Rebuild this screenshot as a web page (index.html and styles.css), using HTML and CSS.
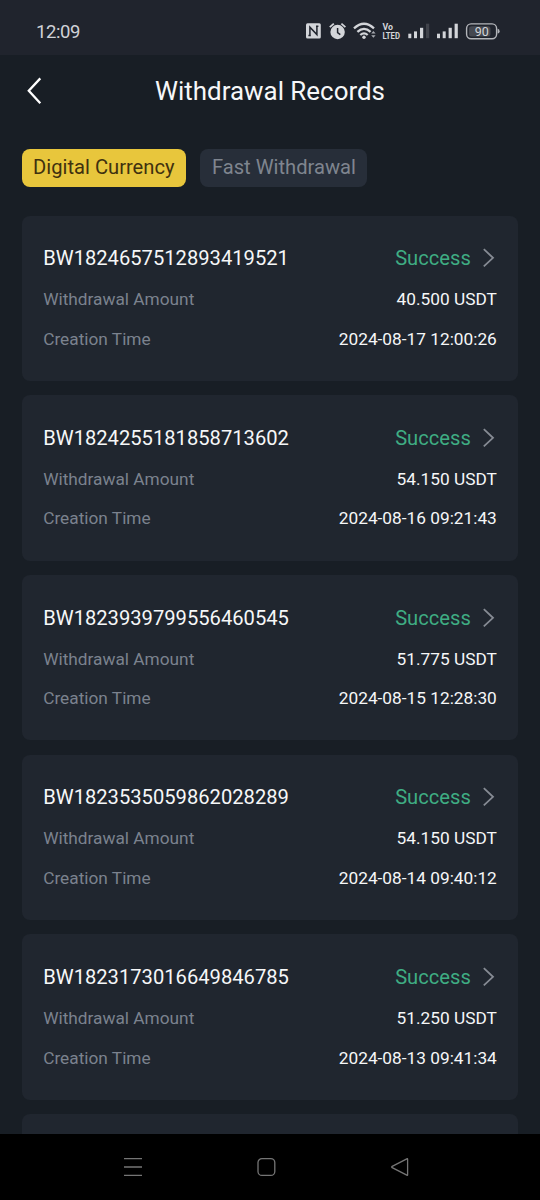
FILE: index.html
```html
<!DOCTYPE html>
<html lang="en">
<head>
<meta charset="utf-8">
<title>Withdrawal Records</title>
<link rel="stylesheet" href="styles.css">
</head>
<body>
<div class="screen">
  <div class="status">
    <span class="clock">12:09</span>
    <svg class="status-icons" width="220" height="45" viewBox="0 0 220 45">
      <rect x="16" y="13.3" width="14.8" height="15.2" rx="1.5" fill="#d3d5d9"/>
      <path d="M19.9 25.6V17.2L26.9 24.6V16.2M18.4 25.6h2.4M26 16.2h2.4" fill="none" stroke="#20242d" stroke-width="1.5"/>
      <circle cx="47.6" cy="22" r="7.2" fill="#d3d5d9"/>
      <path d="M39.8 17.2l4-3.6M55.4 17.2l-4-3.6" stroke="#d3d5d9" stroke-width="1.8"/>
      <path d="M47.6 18v4.6l2.7 2" fill="none" stroke="#20242d" stroke-width="1.5"/>
      <g fill="none" stroke="#d3d5d9" stroke-width="2.3">
        <path d="M64 18.4q10-9.2 20 0M67.4 21.9q6.6-6 13.2 0M70.3 25q3.7-3.2 7.4 0"/>
      </g>
      <circle cx="74" cy="27.2" r="1.7" fill="#d3d5d9"/>
      <path d="M81.2 23.6l2.2-2.5 2.2 2.5zM81.2 25.2l2.2 2.5 2.2-2.5z" fill="#a7aab0"/>
      <text x="92.5" y="19.9" class="volte" textLength="10.5" lengthAdjust="spacingAndGlyphs">Vo</text>
      <text x="92.5" y="28.5" class="volte" textLength="17.5" lengthAdjust="spacingAndGlyphs">LTED</text>
      <g fill="#d3d5d9">
        <rect x="118.3" y="23.7" width="3" height="4.5"/>
        <rect x="124" y="21.4" width="3" height="6.8"/>
        <rect x="130" y="17.8" width="3.2" height="10.4"/>
        <rect x="136" y="13.7" width="3.2" height="14.5" fill="#40434b"/>
        <rect x="147" y="23.7" width="3" height="4.5"/>
        <rect x="152.7" y="21.4" width="3" height="6.8"/>
        <rect x="158.6" y="17.8" width="3.2" height="10.4"/>
        <rect x="164.6" y="13.7" width="3.2" height="14.5"/>
      </g>
      <rect x="176.6" y="13.9" width="30" height="14.8" rx="4.5" fill="none" stroke="#b3b5ba" stroke-width="1.4"/>
      <rect x="179" y="16.2" width="21.5" height="10.2" rx="2.5" fill="#454850"/>
      <path d="M207.6 18.8q2 .3 2 2.4t-2 2.4z" fill="#b3b5ba"/>
      <text x="184.8" y="25.7" class="battery" textLength="14">90</text>
    </svg>
  </div>
  <header class="header">
    <svg class="back" width="20" height="32" viewBox="0 0 20 32"><path d="M17.3 3.4L5.8 15.8 17.3 28.2" fill="none" stroke="#fff" stroke-width="2.3"/></svg>
    <h1 class="title">Withdrawal Records</h1>
  </header>
  <nav class="tabs">
    <span class="tab tab-active">Digital Currency</span>
    <span class="tab">Fast Withdrawal</span>
  </nav>
  <main class="list">
    <section class="card">
      <div class="row row-head"><span>BW1824657512893419521</span><span class="state">Success<svg class="arrow" width="12" height="20" viewBox="0 0 12 20"><path d="M.8 1.2L10 9.8 .8 18.4"/></svg></span></div>
      <div class="row"><span class="label">Withdrawal Amount</span><span>40.500 USDT</span></div>
      <div class="row"><span class="label">Creation Time</span><span>2024-08-17 12:00:26</span></div>
    </section>
    <section class="card">
      <div class="row row-head"><span>BW1824255181858713602</span><span class="state">Success<svg class="arrow" width="12" height="20" viewBox="0 0 12 20"><path d="M.8 1.2L10 9.8 .8 18.4"/></svg></span></div>
      <div class="row"><span class="label">Withdrawal Amount</span><span>54.150 USDT</span></div>
      <div class="row"><span class="label">Creation Time</span><span>2024-08-16 09:21:43</span></div>
    </section>
    <section class="card">
      <div class="row row-head"><span>BW1823939799556460545</span><span class="state">Success<svg class="arrow" width="12" height="20" viewBox="0 0 12 20"><path d="M.8 1.2L10 9.8 .8 18.4"/></svg></span></div>
      <div class="row"><span class="label">Withdrawal Amount</span><span>51.775 USDT</span></div>
      <div class="row"><span class="label">Creation Time</span><span>2024-08-15 12:28:30</span></div>
    </section>
    <section class="card">
      <div class="row row-head"><span>BW1823535059862028289</span><span class="state">Success<svg class="arrow" width="12" height="20" viewBox="0 0 12 20"><path d="M.8 1.2L10 9.8 .8 18.4"/></svg></span></div>
      <div class="row"><span class="label">Withdrawal Amount</span><span>54.150 USDT</span></div>
      <div class="row"><span class="label">Creation Time</span><span>2024-08-14 09:40:12</span></div>
    </section>
    <section class="card">
      <div class="row row-head"><span>BW1823173016649846785</span><span class="state">Success<svg class="arrow" width="12" height="20" viewBox="0 0 12 20"><path d="M.8 1.2L10 9.8 .8 18.4"/></svg></span></div>
      <div class="row"><span class="label">Withdrawal Amount</span><span>51.250 USDT</span></div>
      <div class="row"><span class="label">Creation Time</span><span>2024-08-13 09:41:34</span></div>
    </section>
    <section class="card"></section>
  </main>
  <footer class="navbar">
    <svg width="20" height="20" viewBox="0 0 20 20"><path d="M1 1.6h18M1 10h18M1 18.4h18"/></svg>
    <svg width="20" height="20" viewBox="0 0 20 20"><rect x="2" y="1.6" width="16.8" height="16.8" rx="4"/></svg>
    <svg width="20" height="20" viewBox="0 0 20 20"><path d="M17.6 2.2v15.6q0 .8-.8.4L2.2 10.7q-1-.7 0-1.4L16.8 1.8q.8-.4.8.4z"/></svg>
  </footer>
</div>
</body>
</html>
```
FILE: styles.css
```css
* { box-sizing: border-box; }
body {
  margin: 0;
  background: #181e25;
  font-family: Roboto, "Liberation Sans", sans-serif;
  color: #f6f7f8;
}
.screen {
  width: 540px;
  height: 1200px;
  display: flex;
  flex-direction: column;
  overflow: hidden;
}
.status {
  flex: none;
  height: 55px;
  padding: 10px 30px 0 36px;
  background: #20242d;
  display: flex;
  justify-content: space-between;
}
.clock {
  font-size: 18.5px;
  line-height: 44px;
  letter-spacing: -0.4px;
  color: #d0d2d7;
}
.volte { font: bold 8.5px Roboto, sans-serif; fill: #d3d5d9; }
.battery { font: 12.5px Roboto, sans-serif; fill: #d3d5d9; }
.header {
  flex: none;
  height: 71.5px;
  padding: 0 23px;
  display: grid;
  grid-template-columns: 20px 1fr 20px;
  align-items: center;
}
.title {
  margin: 0;
  font-size: 25.92px;
  font-weight: 400;
  text-align: center;
}
.tabs {
  flex: none;
  height: 89.1px;
  padding: 22px 21.6px 0;
  display: flex;
  align-items: flex-start;
  gap: 14.4px;
}
.tab {
  height: 38px;
  padding: 0 11.5px;
  border-radius: 8px;
  background: #272e39;
  color: #7f858f;
  font-size: 20.16px;
  line-height: 37.6px;
  white-space: nowrap;
}
.tab-active { background: #e8c63c; color: #40310f; }
.list {
  flex: 1;
  min-height: 0;
  overflow: hidden;
  padding: 0 21.6px;
  display: flex;
  flex-direction: column;
  gap: 14.4px;
}
.card {
  flex: none;
  height: 165.3px;
  padding: 21.4px 21.6px 0;
  border-radius: 8px;
  background: #20262f;
}
.row {
  height: 39.6px;
  display: flex;
  justify-content: space-between;
  align-items: center;
  font-size: 17.28px;
}
.row-head { height: 42.4px; font-size: 20.16px; }
.label { color: #7b828e; }
.state {
  display: flex;
  align-items: center;
  gap: 12px;
  padding-right: 2px;
  color: #3fad83;
}
.arrow { fill: none; stroke: #868b94; stroke-width: 1.8; }
.navbar {
  flex: none;
  height: 66px;
  padding: 0 130.5px 0 122.5px;
  background: #000;
  display: flex;
  justify-content: space-between;
  align-items: center;
}
.navbar svg { fill: none; stroke: #757575; stroke-width: 1.3; }
```
